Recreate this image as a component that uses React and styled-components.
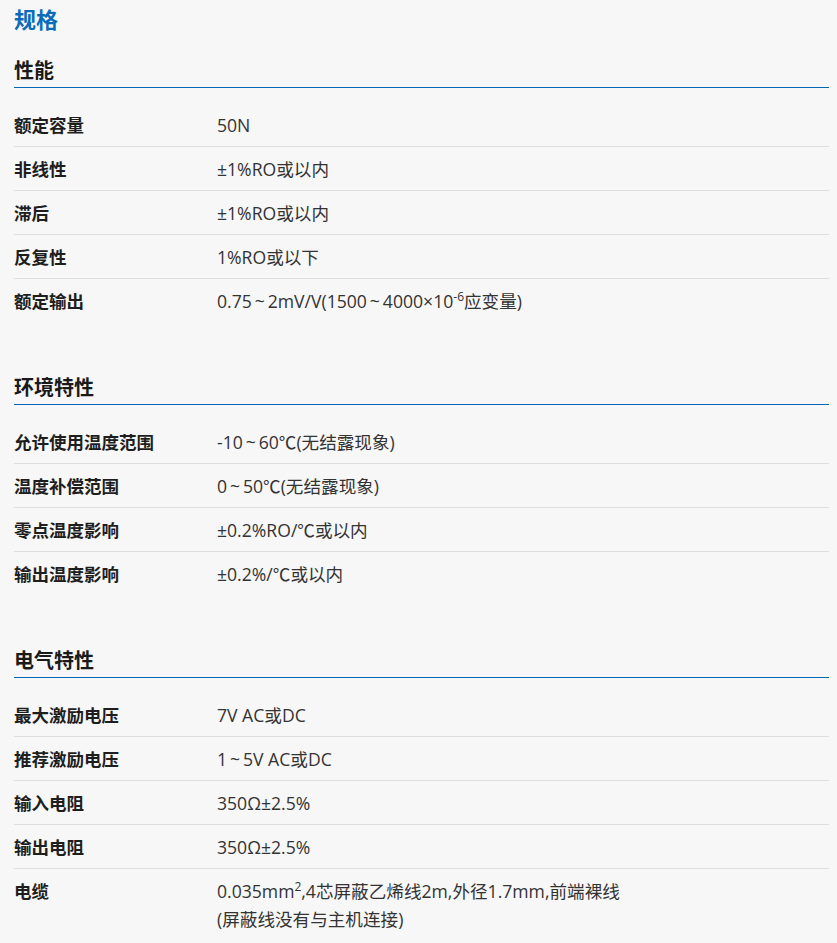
import React from "react";
import styled, { createGlobalStyle } from "styled-components";

const Global = createGlobalStyle`
  html, body { margin: 0; padding: 0; background: #f7f7f7; }
  body { font-family: "Noto Sans", "Noto Sans CJK SC", sans-serif; color: #222; }
`;

const Page = styled.div`
  padding: 4px 8px 0 14px;
  background: #f7f7f7;
  min-height: 943px;
  box-sizing: border-box;
`;

const Title = styled.h2`
  margin: 0;
  font-size: 22px;
  line-height: 28px;
  font-weight: 700;
  color: #0a6cb9;
  font-family: "Noto Sans CJK SC", sans-serif;
`;

const Section = styled.section`
  margin-top: ${(p) => p.$top}px;
`;

const Heading = styled.h3`
  margin: 0;
  font-size: 20px;
  line-height: 28px;
  font-weight: 700;
  color: #1a1a1a;
  padding-bottom: 3px;
  border-bottom: 1px solid #0068b7;
  font-family: "Noto Sans CJK SC", sans-serif;
`;

const Rows = styled.div`
  margin-top: 15px;
  display: flex;
  flex-direction: column;
`;

const Row = styled.div`
  display: grid;
  grid-template-columns: 203px 1fr;
  min-height: 43px;
  box-sizing: border-box;
  padding: 8px 0 7px;
  border-bottom: 1px solid ${(p) => (p.$last ? "transparent" : "#dedede")};
  align-items: start;
  line-height: 28px;
`;

const Label = styled.div`
  font-size: 17.5px;
  font-weight: 700;
  color: #1e1e1e;
  font-family: "Noto Sans CJK SC", sans-serif;
`;

const Value = styled.div`
  font-size: 17.6px;
  color: #333;
  font-family: "Open Sans", "Noto Sans CJK SC", sans-serif;
`;

const Sup = styled.sup`
  font-size: 12px;
  line-height: 0;
  vertical-align: 7px;
`;

const T = "\u2009~\u2009";

const sections = [
  {
    title: "性能",
    top: 24,
    rows: [
      ["额定容量", "50N"],
      ["非线性", "±1%RO或以内"],
      ["滞后", "±1%RO或以内"],
      ["反复性", "1%RO或以下"],
      [
        "额定输出",
        <>
          0.75{T}2mV/V(1500{T}4000×10<Sup>-6</Sup>应变量)
        </>,
      ],
    ],
  },
  {
    title: "环境特性",
    top: 50,
    rows: [
      ["允许使用温度范围", `-10${T}60℃(无结露现象)`],
      ["温度补偿范围", `0${T}50℃(无结露现象)`],
      ["零点温度影响", "±0.2%RO/℃或以内"],
      ["输出温度影响", "±0.2%/℃或以内"],
    ],
  },
  {
    title: "电气特性",
    top: 50,
    rows: [
      ["最大激励电压", "7V AC或DC"],
      ["推荐激励电压", `1${T}5V AC或DC`],
      ["输入电阻", "350Ω±2.5%"],
      ["输出电阻", "350Ω±2.5%"],
      [
        "电缆",
        <>
          0.035mm<Sup>2</Sup>,4芯屏蔽乙烯线2m,外径1.7mm,前端裸线
          <br />
          (屏蔽线没有与主机连接)
        </>,
      ],
    ],
  },
];

export default function App() {
  return (
    <>
      <Global />
      <Page>
        <Title>规格</Title>
        {sections.map((s) => (
          <Section key={s.title} $top={s.top}>
            <Heading>{s.title}</Heading>
            <Rows>
              {s.rows.map(([l, v], i) => (
                <Row key={l} $last={i === s.rows.length - 1}>
                  <Label>{l}</Label>
                  <Value>{v}</Value>
                </Row>
              ))}
            </Rows>
          </Section>
        ))}
      </Page>
    </>
  );
}
